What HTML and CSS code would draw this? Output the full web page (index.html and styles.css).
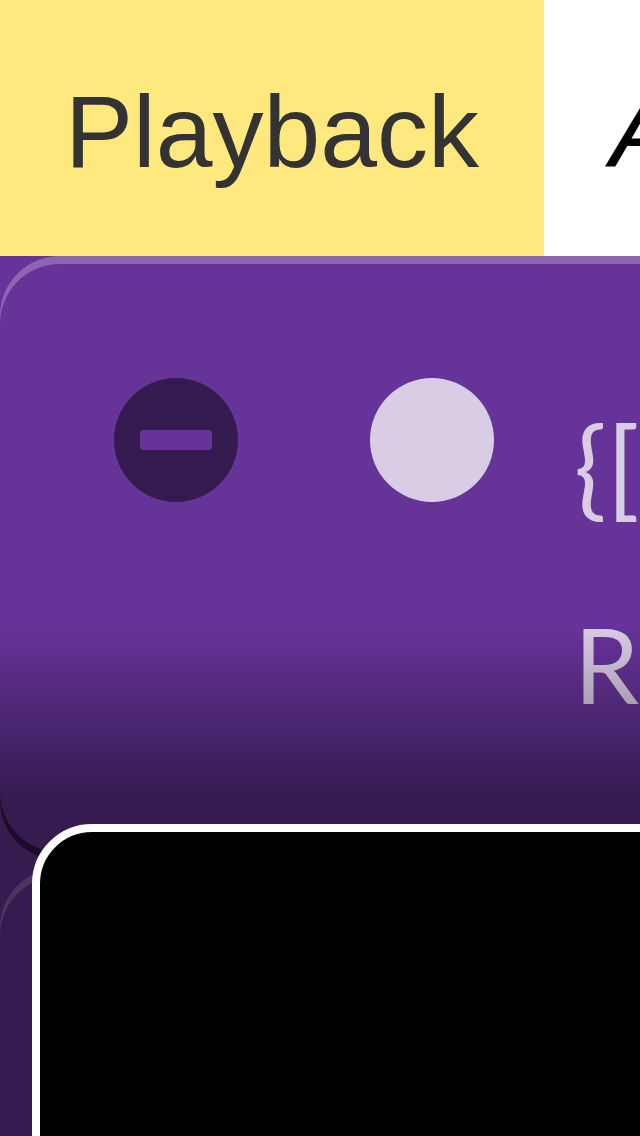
FILE: index.html
```html
<!DOCTYPE html>
<html>
<head>
<meta charset="utf-8">
<link rel="stylesheet" href="styles.css">
</head>
<body>
<div class="app">
  <nav class="tabs">
    <div class="tab tab-active">Playback</div>
    <div class="tab tab-other">About</div>
  </nav>
  <main class="list">
    <section class="card">
      <div class="circle circle-dark"><span class="minus"></span></div>
      <div class="circle circle-light"></div>
      <div class="card-text">
        <div class="code">{[</div>
        <div class="big">R</div>
      </div>
    </section>
    <section class="card">
      <div class="circle circle-dark"><span class="minus"></span></div>
      <div class="circle circle-light"></div>
    </section>
    <div class="fade"></div>
    <div class="player"></div>
  </main>
</div>
</body>
</html>
```

FILE: styles.css
```css
html, body {
  margin: 0;
  padding: 0;
}
body {
  width: 640px;
  height: 1136px;
  overflow: hidden;
  background: #663399;
  font-family: "Liberation Sans", Arial, sans-serif;
}
.app {
  display: flex;
  flex-direction: column;
  height: 1136px;
}
.tabs {
  display: flex;
  height: 256px;
  flex: none;
}
.tab {
  display: flex;
  align-items: center;
  font-size: 102px;
  line-height: 1;
  padding-top: 8px;
  box-sizing: border-box;
  white-space: nowrap;
  overflow: hidden;
}
.tab-active {
  width: 544px;
  flex: none;
  justify-content: center;
  background: #ffe97f;
  color: #333333;
}
.tab-other {
  flex: 1;
  background: #ffffff;
  color: #000000;
  font-style: italic;
  padding-left: 66px;
}
.list {
  position: relative;
  flex: 1;
  overflow: hidden;
  background: #663399;
}
.card {
  display: flex;
  align-items: flex-start;
  width: 900px;
  height: 596px;
  margin-bottom: 16px;
  padding: 122px 0 0 114px;
  box-sizing: border-box;
  background: #663399;
  border-radius: 60px;
  box-shadow: inset 0 8px 0 rgba(255, 255, 255, 0.25), 0 8px 0 rgba(0, 0, 0, 0.5);
}
.circle {
  width: 124px;
  height: 124px;
  border-radius: 50%;
  flex: none;
  display: flex;
  align-items: center;
  justify-content: center;
}
.circle-dark {
  background: #351a4f;
  margin-right: 132px;
}
.circle-light {
  background: #d9cce5;
  margin-right: 80px;
}
.minus {
  width: 72px;
  height: 20px;
  border-radius: 3px;
  background: #663399;
}
.card-text {
  color: #d9cce5;
  font-family: Lato, "Liberation Sans", sans-serif;
  font-weight: 400;
  white-space: nowrap;
}
.code {
  font-size: 108px;
  line-height: 1;
  margin-top: 32px;
}
.big {
  font-size: 104px;
  line-height: 1;
  margin-top: 94px;
}
.fade {
  position: absolute;
  left: 0;
  top: 0;
  right: 0;
  bottom: 0;
  pointer-events: none;
  background: linear-gradient(to bottom, rgba(0, 0, 0, 0) 0px, rgba(0, 0, 0, 0) 370px, rgba(0, 0, 0, 0.47) 540px, rgba(0, 0, 0, 0.47) 100%);
}
.player {
  position: absolute;
  left: 32px;
  top: 568px;
  width: 700px;
  height: 500px;
  background: #000000;
  border: 8px solid #ffffff;
  border-radius: 60px;
}
```
